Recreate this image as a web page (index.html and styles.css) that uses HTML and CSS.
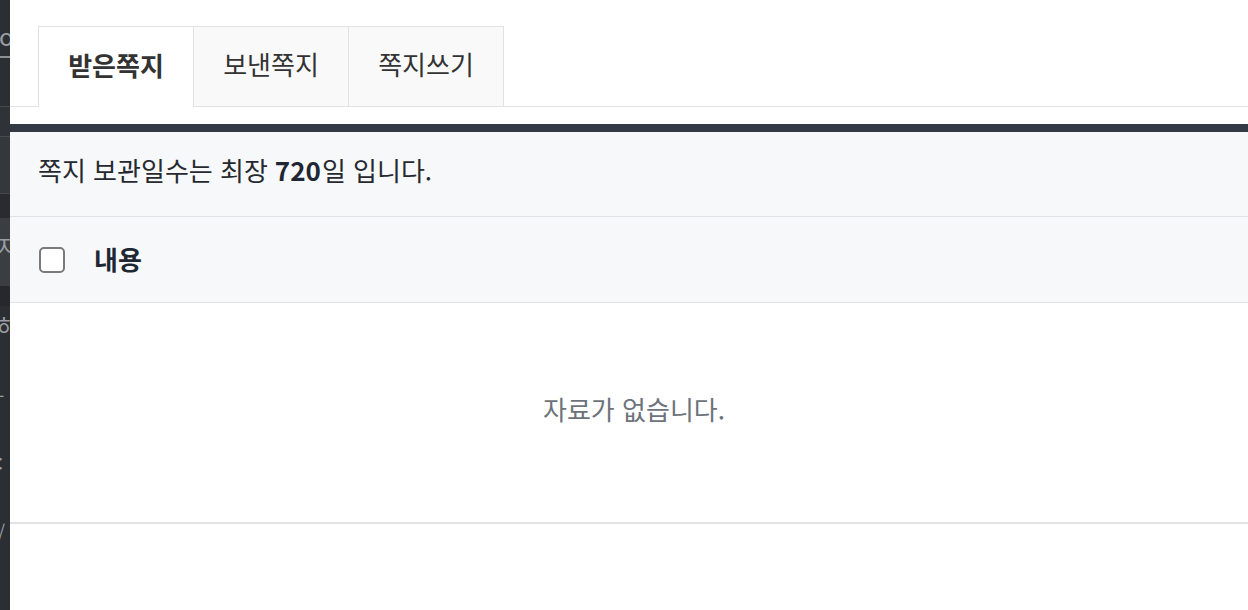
FILE: index.html
```html
<html lang="ko">
<head>
    <meta charset="utf-8">
    <meta name="viewport" content="width=device-width, initial-scale=1">
    <title>쪽지함</title>
    <link rel="stylesheet" href="styles.css">
</head>

<body>
<aside class="backdrop">
    <div class="bd-block bd-a"><span class="bd-ch">으</span></div>
    <div class="bd-block bd-b"></div>
    <div class="bd-block bd-c"></div>
    <div class="bd-block bd-d"></div>
    <div class="bd-block bd-e"><span class="bd-ch">지</span></div>
    <div class="bd-block bd-f"></div>
    <div class="bd-block bd-g">
        <span class="bd-ch">하</span>
        <span class="bd-ch small">-</span>
        <span class="bd-ch small">:</span>
        <span class="bd-ch small">/</span>
    </div>
</aside>

<main class="memo">
    <nav class="tabs">
        <a class="tab active" href="#">받은쪽지</a>
        <a class="tab" href="#">보낸쪽지</a>
        <a class="tab" href="#">쪽지쓰기</a>
    </nav>

    <div class="memo-box">
        <p class="notice">쪽지 보관일수는 최장 <strong>720</strong>일 입니다.</p>

        <div class="list-head">
            <label class="chk"><input type="checkbox"><span></span></label>
            <strong>내용</strong>
        </div>

        <div class="empty">자료가 없습니다.</div>
    </div>
</main>
</body>
</html>
```

FILE: styles.css
```css
* {
    margin: 0;
    padding: 0;
    box-sizing: border-box;
}

a:link, a:visited {
    text-decoration: none;
    color: inherit;
}

html, body {
    height: 100%;
}

body {
    display: flex;
    overflow: hidden;
    background: #fff;
    color: #333;
    font: normal 26px "Noto Sans CJK KR", "Noto Sans", sans-serif;
}

/* 뒤에 깔린 페이지 조각 */
.backdrop {
    width: 10px;
    flex: none;
    overflow: hidden;
    background: #2b2e33;
    color: #9a9da3;
}

.bd-block {
    position: relative;
    overflow: hidden;
    border-bottom: 1px solid #46494f;
}

.bd-ch {
    display: block;
    margin-left: -3px;
    font-size: 22px;
    line-height: 1;
}

.bd-ch.small {
    margin: 50px 0 0 -2px;
    font-size: 18px;
}

.bd-a { height: 107px; padding-top: 32px; }
.bd-a .bd-ch { border-bottom: 2px solid #8d9096; padding-bottom: 2px; width: 24px; color: transparent; position: relative; }
.bd-a .bd-ch::before { content: "o"; position: absolute; left: 2px; top: -8px; color: #9a9da3; font-size: 24px; }
.bd-b { height: 30px; background: #2f3237; }
.bd-c { height: 57px; background: #34373c; }
.bd-d { height: 24px; background: #292b30; border-bottom: none; }
.bd-e { height: 68px; background: #3a3d42; padding-top: 16px; border-bottom: none; }
.bd-f { height: 20px; background: #26282d; border-bottom: none; }
.bd-g { height: 303px; border-bottom: none; padding-top: 8px; }

.memo {
    flex: 1;
    min-width: 0;
}

.tabs {
    display: flex;
    padding: 26px 0 0 28px;
    border-bottom: 1px solid #e2e2e2;
}

.tab {
    display: flex;
    align-items: center;
    justify-content: center;
    width: 156px;
    height: 80px;
    padding-bottom: 6px;
    margin-bottom: -1px;
    margin-left: -1px;
    border: 1px solid #e2e2e2;
    border-bottom: none;
    background: #f9f9f9;
    color: #333;
}

.tab:first-child {
    margin-left: 0;
}

.tab.active {
    background: #fff;
    font-weight: 700;
    height: 81px;
}

.memo-box {
    margin-top: 17px;
    border-top: 8px solid #333a44;
}

.notice {
    height: 85px;
    padding: 0 0 9px 28px;
    display: flex;
    align-items: center;
    background: #f7f8fa;
    border-bottom: 1px solid #e1e2e6;
    color: #262a30;
}

.notice strong {
    margin: 0 1px 0 7px;
    color: #1f2733;
}

.list-head {
    height: 86px;
    display: flex;
    align-items: center;
    padding: 0 0 3px 29px;
    background: #f7f8fa;
    border-bottom: 1px solid #e1e2e6;
    color: #1f2733;
}

.chk input {
    display: none;
}

.chk span {
    display: block;
    width: 26px;
    height: 26px;
    margin: 3px 29px 0 0;
    border: 2px solid #7a7a7a;
    border-radius: 5px;
    background: #fff;
}

.empty {
    height: 221px;
    display: flex;
    align-items: center;
    justify-content: center;
    padding: 0 0 8px 10px;
    border-bottom: 2px solid #e1e2e6;
    color: #6d737a;
}
```
